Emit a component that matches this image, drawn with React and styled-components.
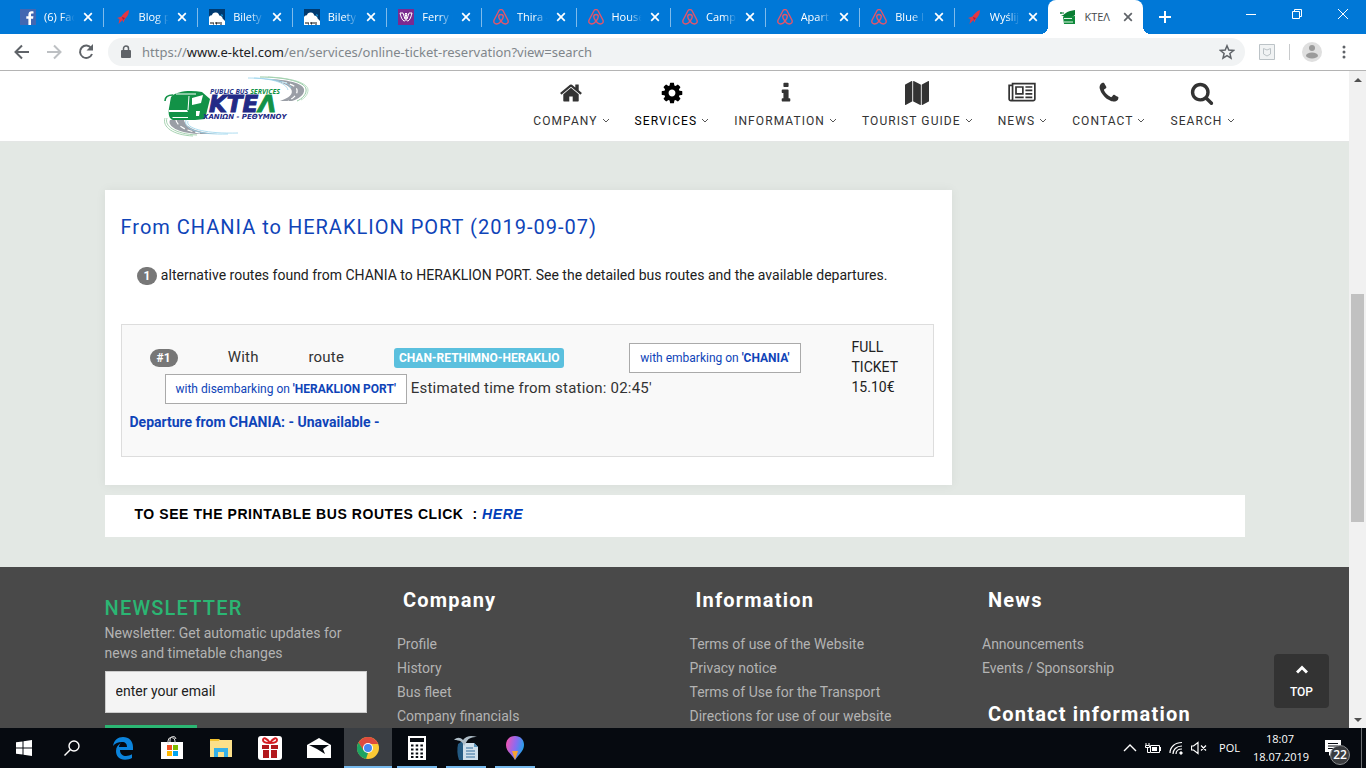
import React from "react";
import styled, { createGlobalStyle, css } from "styled-components";

const GlobalStyle = createGlobalStyle`
  *, *::before, *::after { box-sizing: border-box; }
  body { margin: 0; font-family: Roboto, "Liberation Sans", sans-serif; font-size: 14px; line-height: 20px; color: #212121; }
  button, input { font: inherit; }
  h1, h2, h3, p, ul { margin: 0; padding: 0; }
  ul { list-style: none; }
  a { color: inherit; text-decoration: none; }
  svg { display: block; flex: none; }
`;

const UI = `"Open Sans", "Noto Sans", sans-serif`;

const Screen = styled.div`
  height: 100vh;
  display: flex;
  flex-direction: column;
  overflow: hidden;
`;

/* ---------- browser chrome ---------- */

const TabStrip = styled.div`
  flex: none;
  height: 34px;
  display: flex;
  padding-left: 8px;
  background: #0078d7;
  font-family: ${UI};
  font-size: 11px;
`;

const Tabs = styled.div`
  flex: 1;
  display: grid;
  grid-template-columns: repeat(12, minmax(0, 1fr));
`;

const Tab = styled.div`
  display: flex;
  align-items: center;
  padding: 0 7px 0 12px;
  color: ${(p) => (p.$active ? "#45494d" : "#fff")};
  background: ${(p) => (p.$active ? "#fff" : "transparent")};
  border-radius: ${(p) => (p.$active ? "8px 8px 0 0" : "0")};
  position: relative;
  ${(p) =>
    p.$divider &&
    css`
      &::after {
        content: "";
        position: absolute;
        right: -1px;
        top: 8px;
        height: 19px;
        width: 1px;
        background: #7fbbeb;
      }
    `}
  ${(p) =>
    p.$active &&
    css`
      &::before, &::after {
        content: "";
        position: absolute;
        bottom: 0;
        width: 8px;
        height: 8px;
      }
      &::before { left: -8px; background: radial-gradient(circle at 0 0, transparent 8px, #fff 8px); }
      &::after { right: -8px; background: radial-gradient(circle at 100% 0, transparent 8px, #fff 8px); }
    `}
`;

const TabTitle = styled.span`
  flex: 1;
  margin: 0 2px 0 8px;
  overflow: hidden;
  white-space: nowrap;
  mask-image: ${(p) => (p.$fade ? "linear-gradient(to right, #000 50%, transparent 90%)" : "none")};
`;

const PlainButton = styled.button`
  display: flex;
  align-items: center;
  justify-content: center;
  flex: none;
  padding: 0;
  border: 0;
  background: none;
  color: inherit;
`;

const TabClose = styled(PlainButton)`
  width: 16px;
  height: 16px;
`;

const WindowControls = styled.div`
  width: 223px;
  display: flex;
  justify-content: space-between;
  color: #fff;
`;

const NewTab = styled(PlainButton)`
  width: 44px;
  height: 34px;
`;

const ControlGroup = styled.div`
  display: flex;
`;

const ControlButton = styled(PlainButton)`
  width: 46px;
  height: 28px;
`;

const Toolbar = styled.div`
  flex: none;
  height: 37px;
  display: flex;
  align-items: center;
  gap: 16px;
  padding: 0 14px;
  background: #fff;
  border-bottom: 1px solid #b4b4b4;
  color: #5f6368;
`;

const AddressBar = styled.label`
  flex: 1;
  height: 28px;
  margin-left: -2px;
  padding: 0 10px 0 12px;
  display: flex;
  align-items: center;
  border-radius: 14px;
  background: #f1f3f4;
`;

const Address = styled.div`
  flex: 1;
  margin-left: 10px;
  font-family: "Noto Sans", "Open Sans", sans-serif;
  font-size: 13px;
  color: #80868b;
  b { font-weight: 400; color: #202124; }
`;

const ToolbarEnd = styled.div`
  display: flex;
  align-items: center;
  gap: 12px;
  margin-left: -2px;
`;

const ToolbarDivider = styled.span`
  width: 1px;
  height: 16px;
  margin-left: 2px;
  background: #c8cacc;
`;

const MenuButton = styled(PlainButton)`
  margin-left: 2px;
`;

/* ---------- page ---------- */

const Viewport = styled.div`
  flex: 1;
  min-height: 0;
  display: grid;
  grid-template-columns: minmax(0, 1fr) 17px;
`;

const Page = styled.div`
  position: relative;
  overflow: hidden;
  background: #e3e8e4;
`;

const Header = styled.header`
  height: 71px;
  background: #fff;
  border-bottom: 1px solid #e4e6e5;
`;

const Container = styled.div`
  max-width: 1140px;
  margin: 0 auto;
`;

const HeaderRow = styled(Container)`
  display: flex;
  justify-content: space-between;
  padding: 5px 10px 0 59px;
`;

const Nav = styled.nav`
  display: flex;
  gap: 25px;
`;

const NavItem = styled.a`
  display: flex;
  flex-direction: column;
  align-items: center;
  gap: 6px;
  padding-top: 5px;
  font-size: 12px;
  letter-spacing: 0.09em;
  color: ${(p) => (p.$active ? "#000" : "#333")};
`;

const NavLabel = styled.span`
  display: flex;
  align-items: center;
  gap: 4px;
  white-space: nowrap;
`;

const Card = styled.section`
  max-width: 847px;
  margin-top: 48px;
  padding: 27px 18px 28px 16px;
  background: #fff;
  box-shadow: 0 0 10px rgba(0, 0, 0, 0.06);
`;

const CardTitle = styled.h1`
  font-size: 20px;
  line-height: 20px;
  font-weight: 400;
  letter-spacing: 1px;
  color: #0f44b8;
`;

const Summary = styled.p`
  margin: 28px 0 39px 16px;
`;

const Badge = styled.span`
  display: inline-block;
  padding: 3px 7px;
  border-radius: 10px;
  background: #777;
  color: #fff;
  font-size: 12px;
  line-height: 12px;
  font-weight: 700;
  vertical-align: middle;
`;

const Route = styled.article`
  height: 133px;
  padding: 12px 8px;
  border: 1px solid #ddd;
  background: #f9f9f9;
`;

const RouteRow = styled.div`
  display: flex;
  gap: 51px;
  padding-left: 20px;
`;

const RouteText = styled.p`
  flex: none;
  width: 651px;
  padding-top: 5px;
  font-size: 15px;
  line-height: 30px;
  letter-spacing: 0.014em;
  text-align: justify;
  color: #333;
`;

const RouteLabel = styled.span`
  display: inline-block;
  padding: 4px 5px;
  border-radius: 3px;
  background: #5bc0de;
  color: #fff;
  font-size: 12px;
  line-height: 12px;
  font-weight: 700;
  letter-spacing: 0;
  vertical-align: middle;
`;

const StopButton = styled.button`
  height: 30px;
  margin: 0 0 0 15px;
  padding: 0 10px;
  border: 1px solid #aaa;
  background: #fff;
  color: #0f44b8;
  font-size: 12px;
  line-height: 18px;
  letter-spacing: 0;
  vertical-align: middle;
  b { font-weight: 700; }
`;

const Price = styled.div`
  width: 60px;
`;

const Departure = styled.p`
  margin-top: 8px;
  font-weight: 700;
  color: #0f44b8;
`;

const Banner = styled.section`
  margin: 10px 0 30px;
  padding: 9px 30px 13px;
  background: #fff;
  font-family: "Liberation Sans", Arial, sans-serif;
  font-weight: 700;
  color: #000;
  letter-spacing: 0.04em;
  white-space: pre;
  a { color: #003db8; font-style: italic; }
`;

const Footer = styled.footer`
  background: #494949;
  color: #b3b3b3;
`;

const FooterGrid = styled(Container)`
  display: grid;
  grid-template-columns: repeat(4, minmax(0, 1fr));
  gap: 30px;
  padding-top: 23px;
`;

const Newsletter = styled.form`
  display: flex;
  flex-direction: column;
  align-items: flex-start;
  padding-top: 6px;
`;

const NewsletterTitle = styled.h2`
  font-size: 20px;
  line-height: 24px;
  margin-bottom: 3px;
  font-weight: 500;
  letter-spacing: 0.06em;
  color: #2bb673;
`;

const EmailInput = styled.input`
  width: 100%;
  height: 42px;
  margin: 8px 0 12px;
  padding: 0 10px 2px;
  border: 1px solid #ccc;
  background: #f4f4f4;
  color: #212121;
  &::placeholder { color: #212121; opacity: 1; }
`;

const Subscribe = styled.button`
  width: 92px;
  height: 36px;
  border: 0;
  background: #2bb673;
  color: #fff;
`;

const FooterTitle = styled.h3`
  padding-left: 6px;
  font-size: 20px;
  line-height: 20px;
  font-weight: 700;
  letter-spacing: 0.06em;
  color: #fff;
`;

const LinkList = styled.ul`
  padding: 22px 0 24px;
  line-height: 24px;
`;

const TopButton = styled.button`
  position: absolute;
  right: 20px;
  bottom: 20px;
  width: 55px;
  height: 54px;
  display: flex;
  flex-direction: column;
  align-items: center;
  gap: 8px;
  padding: 11px 0 0;
  border: 0;
  border-radius: 4px;
  background: #333;
  color: #fff;
  font-size: 12px;
  font-weight: 500;
`;

const Scrollbar = styled.div`
  display: flex;
  flex-direction: column;
  background: #f1f1f1;
`;

const ScrollArrow = styled(PlainButton)`
  height: 17px;
  color: #505050;
`;

const ScrollSpace = styled.div`
  flex: ${(p) => p.$size};
`;

const ScrollThumb = styled.div`
  flex: 228;
  margin: 0 2px;
  background: #c1c1c1;
`;

/* ---------- taskbar ---------- */

const Taskbar = styled.div`
  flex: none;
  height: 40px;
  display: flex;
  justify-content: space-between;
  background: #060a10;
  color: #fff;
  font-family: ${UI};
  font-size: 12px;
`;

const StartArea = styled.div`
  display: flex;
  margin-right: 3px;
`;

const TaskGroup = styled.div`
  display: flex;
`;

const Apps = styled.div`
  display: flex;
  gap: 1px;
`;

const AppButton = styled(PlainButton)`
  position: relative;
  width: 48px;
  height: 40px;
  background: ${(p) => (p.$active ? "#3a3e43" : "none")};
  ${(p) =>
    (p.$open || p.$active) &&
    css`
      &::after {
        content: "";
        position: absolute;
        bottom: 0;
        left: ${p.$active ? "0" : "4px"};
        right: ${p.$active ? "0" : "4px"};
        height: 2px;
        background: #76b9ed;
      }
    `}
`;

const Tray = styled.div`
  display: flex;
  align-items: center;
  gap: 8px;
  padding-right: 4px;
`;

const Language = styled.span`
  margin: 0 5px 0 4px;
  font-size: 11px;
`;

const Clock = styled.time`
  width: 54px;
  text-align: center;
  font-size: 11px;
  line-height: 18px;
  white-space: nowrap;
`;

const Notifications = styled(PlainButton)`
  position: relative;
  width: 36px;
  height: 40px;
  margin-right: 2px;
`;

const NotificationCount = styled.span`
  position: absolute;
  right: 1px;
  bottom: 3px;
  width: 20px;
  height: 20px;
  border: 1px solid #8b8d8f;
  border-radius: 50%;
  background: #3a3c3f;
  font-size: 12px;
  font-weight: 600;
  line-height: 17px;
  text-align: center;
`;

const DesktopEdge = styled.span`
  width: 1px;
  height: 40px;
  background: #6b6e72;
`;

/* ---------- drawings ---------- */

const fa = {
  home: [1792, "M1472 992v480q0 26-19 45t-45 19h-384v-384h-256v384h-384q-26 0-45-19t-19-45v-480q0-1 .5-3t.5-3l575-474 575 474q1 2 1 6zm223-69l-62 74q-8 9-21 11h-3q-13 0-21-7l-692-577-692 577q-12 8-24 7-13-2-21-11l-62-74q-8-10-7-23.500t11-21.500l719-599q32-26 76-26t76 26l244 204v-195q0-14 9-23t23-9h192q14 0 23 9t9 23v408l219 182q10 8 11 21.500t-7 23.500z"],
  cog: [1792, "M1152 896q0-106-75-181t-181-75-181 75-75 181 75 181 181 75 181-75 75-181zm512-109v222q0 12-8 23t-20 13l-185 28q-19 54-39 91 35 50 107 138 10 12 10 25t-9 23q-27 37-99 108t-94 71q-12 0-26-9l-138-108q-44 23-91 38-16 136-29 186-7 28-36 28h-222q-14 0-24.500-8.500t-11.500-21.500l-28-184q-49-16-90-37l-141 107q-10 9-25 9-14 0-25-11-126-114-165-168-7-10-7-23 0-12 8-23 15-21 51-66.500t54-70.500q-27-50-41-99l-183-27q-13-2-21-12.500t-8-23.500v-222q0-12 8-23t19-13l186-28q14-46 39-92-40-57-107-138-10-12-10-24 0-10 9-23 26-36 98.500-107.500t94.500-71.500q13 0 26 10l138 107q44-23 91-38 16-136 29-186 7-28 36-28h222q14 0 24.500 8.500t11.500 21.500l28 184q49 16 90 37l142-107q9-9 24-9 13 0 25 10 129 119 165 170 7 8 7 22 0 12-8 23-15 21-51 66.500t-54 70.500q26 50 41 98l183 28q13 2 21 12.500t8 23.500z"],
  info: [1792, "M1216 1344v128q0 26-19 45t-45 19h-512q-26 0-45-19t-19-45v-128q0-26 19-45t45-19h64v-384h-64q-26 0-45-19t-19-45v-128q0-26 19-45t45-19h384q26 0 45 19t19 45v576h64q26 0 45 19t19 45zm-128-1152v192q0 26-19 45t-45 19h-256q-26 0-45-19t-19-45v-192q0-26 19-45t45-19h256q26 0 45 19t19 45z"],
  map: [1792, "M512 0q13 0 22.500 9.500t9.500 22.500v1472q0 20-17 28l-480 256q-7 4-15 4-13 0-22.500-9.500t-9.500-22.500v-1472q0-20 17-28l480-256q7-4 15-4zm1248 0q13 0 22.500 9.500t9.500 22.500v1472q0 20-17 28l-480 256q-7 4-15 4-13 0-22.500-9.500t-9.500-22.500v-1472q0-20 17-28l480-256q7-4 15-4zm-1120 0q8 0 14 3l512 256q18 10 18 29v1472q0 13-9.500 22.500t-22.500 9.500q-8 0-14-3l-512-256q-18-10-18-29v-1472q0-13 9.500-22.500t22.500-9.500z"],
  news: [2048, "M1024 512h-384v384h384v-384zm128 640v128h-640v-128h640zm0-768v640h-640v-640h640zm640 768v128h-512v-128h512zm0-256v128h-512v-128h512zm0-256v128h-512v-128h512zm0-256v128h-512v-128h512zm-1536 960v-960h-128v960q0 26 19 45t45 19 45-19 19-45zm1664 0v-1088h-1536v1088q0 33-11 64h1483q26 0 45-19t19-45zm128-1216v1216q0 80-56 136t-136 56h-1664q-80 0-136-56t-56-136v-1088h256v-128h1792z"],
  phone: [1792, "M1600 1240q0 27-10 70.500t-21 68.500q-21 50-122 106-94 51-186 51-27 0-52.500-3.500t-57.500-12.500-47.500-14.500-55.500-20.500-49-18q-98-35-175-83-128-79-264.500-215.500t-215.500-264.500q-48-77-83-175-3-9-18-49t-20.500-55.500-14.500-47.500-12.500-57.500-3.500-52.500q0-92 51-186 56-101 106-122 25-11 68.500-21t70.500-10q14 0 21 3 18 6 53 76 11 19 30 54t35 63.500 31 53.500q3 4 17.500 25t21.500 35.500 7 28.500q0 20-28.500 50t-62 55-62 53-28.500 46q0 9 5 22.500t8.500 20.500 14 24 11.500 19q76 137 174 235t235 174q2 1 19 11.500t24 14 20.500 8.500 22.500 5q18 0 46-28.500t53-62 55-62 50-28.500q14 0 28.500 7t35.500 21.500 25 17.500q25 15 53.500 31t63.500 35 54 30q70 35 76 53 3 7 3 21z"],
  search: [1792, "M1216 832q0-185-131.500-316.500t-316.500-131.500-316.500 131.500-131.500 316.500 131.500 316.500 316.500 131.500 316.500-131.500 131.500-316.500zm512 832q0 52-38 90t-90 38q-54 0-90-38l-343-342q-179 124-399 124-143 0-273.500-55.500t-225-150-150-225-55.500-273.500 55.500-273.500 150-225 225-150 273.500-55.500 273.500 55.500 225 150 150 225 55.500 273.500q0 220-124 399l343 343q37 37 37 90z"],
};

const NavIcon = ({ name }) => (
  <svg width={name === "news" ? 28 : 24} height="24" viewBox={`0 0 ${fa[name][0]} 1792`} fill="currentColor" aria-hidden="true">
    <path d={fa[name][1]} />
  </svg>
);

const Caret = () => (
  <svg width="8" height="6" viewBox="0 0 8 6" fill="none" stroke="#555" strokeWidth="1" aria-hidden="true">
    <path d="M1 1l3 3 3-3" />
  </svg>
);

const Cross = ({ color }) => (
  <svg width="10" height="10" viewBox="0 0 10 10" stroke={color} strokeWidth="1.7" aria-hidden="true">
    <path d="M1.200 1.200l7.600 7.600M8.800 1.200L1.200 8.800" />
  </svg>
);

const favicons = {
  facebook: (
    <>
      <rect width="16" height="16" fill="#4267b2" />
      <path d="M11 16V9.800h2.100l.3-2.500H11V5.800c0-.7.200-1.200 1.200-1.200h1.300V2.400c-.3 0-1-.1-1.900-.1-1.900 0-3.200 1.200-3.200 3.300v1.700H6.300v2.500h2.100V16z" fill="#fff" />
    </>
  ),
  blog: (
    <>
      <path d="M14 1c-3 1-6 4-7.500 6.500L2 9l2.500 1L3.500 15l4-4 .8 2.500 1.700-3.500c2.500-2.500 4-5.500 4-9z" fill="#e23744" />
      <path d="M7 8l3 1-2 2z" fill="#a52138" />
    </>
  ),
  cloud: (
    <>
      <rect width="16" height="16" fill="#003a70" />
      <path d="M0 9c-.3-2 1.500-3 3-2.800C3.400 4 5 3.200 7 3.500c2 .2 3 1.600 3.200 3 2 .2 3.200 1.300 3.400 3L16 12v4H0z" fill="#fff" />
      <path d="M2 13v2M4 13v2h1M7 13v2h1v-2M10 13v2M12 13v3" stroke="#111" fill="none" />
      <path d="M12 5l2 1-1 2" fill="#1ba5e8" />
    </>
  ),
  ferry: (
    <>
      <rect width="16" height="16" fill="#7b2a90" />
      <path d="M2 4h3l2 6 1-2-1-3 1-1 1 1-1 3 1 2 2-6h3c-1 4-2 7-4 8-1 0-2-1-2-2 0 1-1 2-2 2C4 11 3 8 2 4z" fill="none" stroke="#fff" />
    </>
  ),
  airbnb: (
    <path
      d="M8 12.200C6.500 10.300 5.700 9 5.700 7.800a2.300 2.300 0 0 1 4.600 0c0 1.200-.8 2.500-2.300 4.400zm0 0c-1.300 1.600-2.700 2.800-4.300 2.800C1.600 15 .3 13.300 1 11.300L5.800 2C6.400.8 7.100.6 8 .6s1.600.2 2.200 1.400l4.800 9.300c.7 2-.6 3.700-2.700 3.700-1.600 0-3-1.200-4.300-2.800z"
      fill="none"
      stroke="#e0566c"
      strokeWidth="1.400"
    />
  ),
  ktel: (
    <>
      <path d="M1 7c3-1 5-4 9-5l5-1v5l-3 2H4L3 7z" fill="#0a7d33" />
      <path d="M0 4h4M1 3v2" stroke="#0a7d33" />
      <path d="M3 8l12-1v8H4z" fill="#0f8a3b" />
      <path d="M4 9.500h8M4 13h9" stroke="#dff3e4" strokeWidth="1.200" />
    </>
  ),
};

const Favicon = ({ name }) => (
  <svg width="16" height="16" viewBox="0 0 16 16" aria-hidden="true">
    {favicons[name]}
  </svg>
);

const Logo = () => (
  <svg width="148" height="62" viewBox="0 0 148 62" role="img" aria-label="KTEL Chania Rethymno">
    <path d="M100 3C118 3 138 6 140 13c1 6-6 10-12 12h-12c9-3 14-7 11-12C124 8 112 4 100 3z" fill="#9a9ea6" />
    <path d="M6 44c-3 6 8 13 28 14h20C36 57 21 52 20 44z" fill="#9a9ea6" />
    <g fill="none">
      <path d="M118 6c10 2 16 5 15 10-1 4-5 7-9 9M12 44c1 6 10 11 24 13" stroke="#fff" strokeWidth="1.200" strokeDasharray="5 3" />
      <path d="M84 2c22 0 38 4 40 12M90 2c22 1 35 4 37 10" stroke="#9ad4ec" strokeWidth=".8" />
      <path d="M96 1c26 0 45 5 46 12 1 5-4 10-9 12" stroke="#79b98b" strokeWidth=".8" />
      <path d="M104 1c24 1 40 6 40 13 0 4-3 8-7 10" stroke="#a9d5b5" strokeWidth=".8" />
      <path d="M3 42c-3 8 8 16 30 17M1 42c-3 9 8 17 28 18" stroke="#8fc79d" strokeWidth=".8" />
      <path d="M24 45c-3 7 16 13 50 12M22 44c-3 9 12 15 42 14" stroke="#9ad4ec" strokeWidth=".8" />
    </g>
    <path d="M7 21c5-6 19-7 31-5l8 7-5 20-10 1H9c-4-1-5-6-4-12z" fill="#129247" />
    <path d="M5 34h18l1 2H5zM8 41h16v1H9z" fill="#fff" />
    <path d="M28 22l11-3-2 8-9 2zM32 35h4l-1 5h-3z" fill="#fff" />
    <path d="M25 20l-1 14M12 18h20" fill="none" stroke="#fff" />
    <path d="M1 25c0-4 3-6 8-6" stroke="#129247" strokeWidth="1.600" fill="none" />
    <g fontStyle="italic" fontWeight="700">
      <text x="46" y="18" fontFamily="Open Sans, sans-serif" fontSize="7" fill="#129247">
        <tspan fill="#29348a">PUBLIC BUS </tspan>SERVICES
      </text>
      <text x="45" y="36" fontFamily="DejaVu Sans, sans-serif" fontSize="23" fill="#232a86" stroke="#232a86" strokeWidth="1">
        KTE<tspan fill="#129247" stroke="#129247">Λ</tspan>
      </text>
      <text x="39" y="43" fontFamily="DejaVu Sans, sans-serif" fontSize="7" fill="#232a86">ΧΑΝΙΩΝ - ΡΕΘΥΜΝΟΥ</text>
    </g>
  </svg>
);

const Stroke = ({ w = 16, h = w, box, width = 1, children }) => (
  <svg width={w} height={h} viewBox={box || `0 0 ${w} ${h}`} fill="none" stroke="currentColor" strokeWidth={width} aria-hidden="true">
    {children}
  </svg>
);

const apps = [
  {
    name: "Edge",
    icon: (
      <svg width="22" height="24" viewBox="0 0 22 24"><path d="M1 10C2 4 6 1 11 1c6 0 10 4 10 10v3H8c0 4 3 6 6 6 2 0 4-.5 6-1.700V22c-2 1.200-4 1.700-7 1.700C7 23.700 4 20 4 15c0-4 2-6 5-8-1 1-2 2.500-2 4h8c0-3-1.500-5-5-5-4 0-7 1.500-9 4z" fill="#0b84dc" /></svg>
    ),
  },
  {
    name: "Store",
    icon: (
      <svg width="24" height="24" viewBox="0 0 24 24"><path d="M1 6h22v17H1z" fill="#fff" /><path d="M8 8V5a3.500 3.500 0 0 1 7 0v3M10 6V4a3 3 0 0 1 6-1" fill="none" stroke="#ddd" /><path d="M7 9h5v5H7z" fill="#f25022" /><path d="M13 9h5v5h-5z" fill="#7fba00" /><path d="M7 15h5v5H7z" fill="#ffb900" /><path d="M13 15h5v5h-5z" fill="#00a4ef" /></svg>
    ),
  },
  {
    name: "File Explorer",
    icon: (
      <svg width="24" height="20" viewBox="0 0 24 20"><path d="M1 1h9l1 1h12v17H1z" fill="#fbe08a" /><path d="M1 1h9v2H1z" fill="#f2c230" /><path d="M5 10h14v9h-4v-5H9v5H5z" fill="#35b0e8" /></svg>
    ),
  },
  {
    name: "Gifts",
    icon: (
      <svg width="24" height="24" viewBox="0 0 24 24"><rect width="24" height="24" rx="3" fill="#fff" /><path d="M4 9h7v4H4zM13 9h7v4h-7zM5 14h6v8H5zM13 14h6v8h-6z" fill="#b3181d" /><path d="M12 7C9 2 5 1 5 4s4 3 7 3zm0 0c3-5 7-6 7-3s-4 3-7 3z" fill="none" stroke="#d51c22" strokeWidth="2" /></svg>
    ),
  },
  {
    name: "Mail",
    icon: (
      <svg width="24" height="20" viewBox="0 0 24 20"><path d="M0 7l12-7 12 7v13H0z" fill="#fff" /><path d="M2 7h20l-6 4 2 5-8-5z" fill="#060a10" /></svg>
    ),
  },
  {
    name: "Chrome",
    active: true,
    icon: (
      <svg width="24" height="24" viewBox="0 0 24 24"><circle cx="12" cy="12" r="11" fill="#fbc934" /><path d="M2.500 6.500A11 11 0 0 1 21.500 6.500L22 8H12l-5 6z" fill="#dd4b3e" /><path d="M2.500 6.500L7.700 14.500 12 17l-2 6A11 11 0 0 1 2.500 6.500z" fill="#1da362" /><circle cx="12" cy="12" r="5" fill="#fff" /><circle cx="12" cy="12" r="4" fill="#4688f1" /></svg>
    ),
  },
  {
    name: "Calculator",
    open: true,
    icon: (
      <svg width="18" height="24" viewBox="0 0 18 24"><path d="M0 0h18v24H0z" fill="#fff" /><path d="M2 2h14v4H2z" fill="#060a10" /><path d="M3 9.500h12M3 13.500h12M3 17.500h12M3 21h12" stroke="#060a10" strokeWidth="2" strokeDasharray="2.500 2.200" /></svg>
    ),
  },
  {
    name: "Writer",
    open: true,
    icon: (
      <svg width="24" height="24" viewBox="0 0 24 24"><path d="M4 8l6-4v20H5C3 19 3 13 4 8z" fill="#235a82" /><path d="M9 7h11l4 4v13H9z" fill="#cfe0ec" /><path d="M20 7v4h4z" fill="#5b97be" /><path d="M12 12h7M12 15h9M12 18h9M12 21h9" stroke="#356f9b" strokeWidth="1.200" /><path d="M0 4c3-3 6-3 9 0 3-4 8-5 14-3-5 0-8 1-10 4l-3 5C9 6 6 4 0 4z" fill="#aebdc7" /></svg>
    ),
  },
  {
    name: "Paint 3D",
    open: true,
    icon: (
      <svg width="20" height="24" viewBox="0 0 20 24">
        <defs><linearGradient id="drop" x1="0" x2="1" y1="0.300" y2="0.600"><stop offset="0" stopColor="#f055b4" /><stop offset=".5" stopColor="#8b6bf0" /><stop offset="1" stopColor="#17a8ea" /></linearGradient></defs>
        <path d="M10 0c6 0 9 4 9 9 0 6-5 9-9 15C6 18 1 15 1 9c0-5 3-9 9-9z" fill="url(#drop)" /><path d="M7 15h6l-3 9z" fill="#f7a234" />
      </svg>
    ),
  },
];

/* ---------- content ---------- */

const tabs = [
  ["facebook", "(6) Fac"],
  ["blog", "Blog p"],
  ["cloud", "Bilety"],
  ["cloud", "Bilety"],
  ["ferry", "Ferry i"],
  ["airbnb", "Thira -"],
  ["airbnb", "House"],
  ["airbnb", "Camp"],
  ["airbnb", "Apart"],
  ["airbnb", "Blue I"],
  ["blog", "Wyślij"],
  ["ktel", "ΚΤΕΛ"],
];

const navigation = [
  ["home", "COMPANY"],
  ["cog", "SERVICES"],
  ["info", "INFORMATION"],
  ["map", "TOURIST GUIDE"],
  ["news", "NEWS"],
  ["phone", "CONTACT"],
  ["search", "SEARCH"],
];

const companyLinks = ["Profile", "History", "Bus fleet", "Company financials"];
const informationLinks = ["Terms of use of the Website", "Privacy notice", "Terms of Use for the Transport", "Directions for use of our website"];
const newsLinks = ["Announcements", "Events / Sponsorship"];

const FooterLinks = ({ title, links }) => (
  <>
    <FooterTitle>{title}</FooterTitle>
    <LinkList>
      {links.map((l) => (
        <li key={l}><a href="#">{l}</a></li>
      ))}
    </LinkList>
  </>
);

const BrowserChrome = () => (
  <>
    <TabStrip>
      <Tabs>
        {tabs.map(([icon, title], i) => (
          <Tab key={i} $active={i === 11} $divider={i < 10}>
            <Favicon name={icon} />
            <TabTitle $fade={i < 11}>{title}</TabTitle>
            <TabClose aria-label="Close tab"><Cross color={i === 11 ? "#5f6368" : "#fff"} /></TabClose>
          </Tab>
        ))}
      </Tabs>
      <WindowControls>
        <NewTab aria-label="New tab"><Stroke w={12} width={2}><path d="M6 0v12M0 6h12" /></Stroke></NewTab>
        <ControlGroup>
          <ControlButton aria-label="Minimize"><Stroke w={10}><path d="M0 5.500h10" /></Stroke></ControlButton>
          <ControlButton aria-label="Restore"><Stroke w={10}><path d="M.5 2.500h7v7h-7zM2.500 2.500v-2h7v7h-2" /></Stroke></ControlButton>
          <ControlButton aria-label="Close"><Stroke w={10}><path d="M0 0l10 10M10 0L0 10" /></Stroke></ControlButton>
        </ControlGroup>
      </WindowControls>
    </TabStrip>
    <Toolbar>
      <PlainButton aria-label="Back"><Stroke w={16} width={2}><path d="M15 8H2M8 1.500L1.500 8 8 14.500" /></Stroke></PlainButton>
      <PlainButton aria-label="Forward"><Stroke w={16} width={2}><g stroke="#bdc0c3"><path d="M1 8h13M8 1.500L14.500 8 8 14.500" /></g></Stroke></PlainButton>
      <PlainButton aria-label="Reload"><Stroke w={16} width={2}><path d="M13.300 4.200A6.200 6.200 0 1 0 14 10" /><path d="M15 0v6.500H8.500z" fill="currentColor" stroke="none" /></Stroke></PlainButton>
      <AddressBar>
        <svg width="12" height="14" viewBox="0 0 12 14" aria-hidden="true"><path d="M2 5h8q1 0 1 1v6q0 1-1 1H2q-1 0-1-1V6q0-1 1-1z" fill="#5f6368" /><path d="M3.500 5.500V3.500a2.500 2.500 0 0 1 5 0v2" fill="none" stroke="#5f6368" strokeWidth="1.500" /></svg>
        <Address>https://<b>www.e-ktel.com</b>/en/services/online-ticket-reservation?view=search</Address>
        <PlainButton aria-label="Bookmark"><Stroke w={16} width={1.5}><path d="M8 1.800l1.800 4.300 4.700.4-3.600 3 1.100 4.600L8 11.700l-4 2.400 1.100-4.600-3.600-3 4.700-.4z" /></Stroke></PlainButton>
      </AddressBar>
      <ToolbarEnd>
        <PlainButton aria-label="Extension"><Stroke w={16}><g stroke="#bcc3c7"><path d="M.5.5h15v15H.5z" fill="#f1f3f4" /><path d="M4.500 4.500L8 6l3.500-1.500V10L8 12l-3.500-2z" /></g></Stroke></PlainButton>
        <ToolbarDivider />
        <PlainButton aria-label="Profile"><svg width="20" height="20" viewBox="0 0 20 20"><circle cx="10" cy="10" r="10" fill="#dfdfdf" /><circle cx="10" cy="6" r="3" fill="#9a9a9a" /><ellipse cx="10" cy="13.500" rx="6" ry="3" fill="#9a9a9a" /></svg></PlainButton>
        <MenuButton aria-label="Menu"><svg width="16" height="16" viewBox="0 0 16 16" fill="#5f6368"><circle cx="8" cy="3" r="1.500" /><circle cx="8" cy="8" r="1.500" /><circle cx="8" cy="13" r="1.500" /></svg></MenuButton>
      </ToolbarEnd>
    </Toolbar>
  </>
);

const SitePage = () => (
  <Page>
    <Header>
      <HeaderRow>
        <a href="#"><Logo /></a>
        <Nav>
          {navigation.map(([icon, label]) => (
            <NavItem key={label} href="#" $active={label === "SERVICES"}>
              <NavIcon name={icon} />
              <NavLabel>{label} <Caret /></NavLabel>
            </NavItem>
          ))}
        </Nav>
      </HeaderRow>
    </Header>
    <Container as="main">
      <Card>
        <CardTitle>From CHANIA to HERAKLION PORT (2019-09-07)</CardTitle>
        <Summary>
          <Badge>1</Badge> alternative routes found from CHANIA to HERAKLION PORT. See the detailed bus routes and the available departures.
        </Summary>
        <Route>
          <RouteRow>
            <RouteText>
              <Badge>#1</Badge> With route <RouteLabel>CHAN-RETHIMNO-HERAKLIO</RouteLabel>{" "}
              <StopButton>with embarking on <b>'CHANIA'</b></StopButton>{" "}
              <StopButton>with disembarking on <b>'HERAKLION PORT'</b></StopButton>{" "}
              Estimated time from station: 02:45'
            </RouteText>
            <Price>FULL TICKET 15.10€</Price>
          </RouteRow>
          <Departure>Departure from CHANIA: - Unavailable -</Departure>
        </Route>
      </Card>
      <Banner>TO SEE THE PRINTABLE BUS ROUTES CLICK  : <a href="#">HERE</a></Banner>
    </Container>
    <Footer>
      <FooterGrid>
        <Newsletter>
          <NewsletterTitle>NEWSLETTER</NewsletterTitle>
          <label htmlFor="email">Newsletter: Get automatic updates for news and timetable changes</label>
          <EmailInput id="email" type="email" placeholder="enter your email" />
          <Subscribe type="button" aria-label="Subscribe" />
        </Newsletter>
        <div><FooterLinks title="Company" links={companyLinks} /></div>
        <div><FooterLinks title="Information" links={informationLinks} /></div>
        <div>
          <FooterLinks title="News" links={newsLinks} />
          <FooterTitle>Contact information</FooterTitle>
        </div>
      </FooterGrid>
    </Footer>
    <TopButton>
      <Stroke w={12} h={9} width={3}><path d="M1 7.500l5-5 5 5" /></Stroke>
      TOP
    </TopButton>
  </Page>
);

const WindowsTaskbar = () => (
  <Taskbar>
    <TaskGroup>
      <StartArea>
        <AppButton aria-label="Start"><svg width="16" height="16" viewBox="0 0 16 16" fill="#fff"><path d="M0 2.300L6.500 1.400v6.100H0zM7.500 1.200L16 0v7.500H7.500zM0 8.500h6.500v6.100L0 13.700zM7.500 8.500H16V16l-8.500-1.200z" /></svg></AppButton>
        <AppButton aria-label="Search"><Stroke w={16} width={1.4}><circle cx="10" cy="6" r="5" /><path d="M6.500 9.500L.5 15.500" /></Stroke></AppButton>
      </StartArea>
      <Apps>
        {apps.map((a) => (
          <AppButton key={a.name} aria-label={a.name} $active={a.active} $open={a.open}>{a.icon}</AppButton>
        ))}
      </Apps>
    </TaskGroup>
    <Tray>
      <Stroke w={14} h={8} width={1.4}><path d="M1 7l6-6 6 6" /></Stroke>
      <Stroke w={16} h={12}><path d="M5.500 3.500h9v7h-9zM15.500 5v4M1 1v2M4 1v2M.5 3.500h4v2h-4zM2.500 6v4.500H5" /><path d="M7 5h5v4H7z" fill="currentColor" stroke="none" /></Stroke>
      <Stroke w={14}><g><path d="M1 12C1 6 6 1.500 13 1.500M4 13c0-4 3-8 9-8M7 13c0-3 2-5 6-5" strokeWidth="1.200" /><circle cx="12" cy="12" r="1.200" fill="currentColor" /></g></Stroke>
      <Stroke w={16} h={14}><path d="M.5 5v4h2L7 12.500v-11L2.500 5zM10 4.500l5 5M15 4.500l-5 5" strokeWidth="1.200" /></Stroke>
      <Language>POL</Language>
      <Clock>18:07<br />18.07.2019</Clock>
      <Notifications aria-label="22 notifications">
        <svg width="16" height="16" viewBox="0 0 16 16"><path d="M0 0h16v12H8l-4 4v-4H0z" fill="#fff" /><path d="M3 3.500h10M3 6h10M3 8.500h7" stroke="#060a10" /></svg>
        <NotificationCount>22</NotificationCount>
      </Notifications>
      <DesktopEdge />
    </Tray>
  </Taskbar>
);

export default function App() {
  return (
    <Screen>
      <GlobalStyle />
      <BrowserChrome />
      <Viewport>
        <SitePage />
        <Scrollbar>
          <ScrollArrow aria-label="Scroll up"><svg width="8" height="4" viewBox="0 0 8 4" fill="currentColor"><path d="M0 4l4-4 4 4z" /></svg></ScrollArrow>
          <ScrollSpace $size={206} />
          <ScrollThumb />
          <ScrollSpace $size={189} />
          <ScrollArrow aria-label="Scroll down"><svg width="8" height="4" viewBox="0 0 8 4" fill="currentColor"><path d="M0 0l4 4 4-4z" /></svg></ScrollArrow>
        </Scrollbar>
      </Viewport>
      <WindowsTaskbar />
    </Screen>
  );
}
